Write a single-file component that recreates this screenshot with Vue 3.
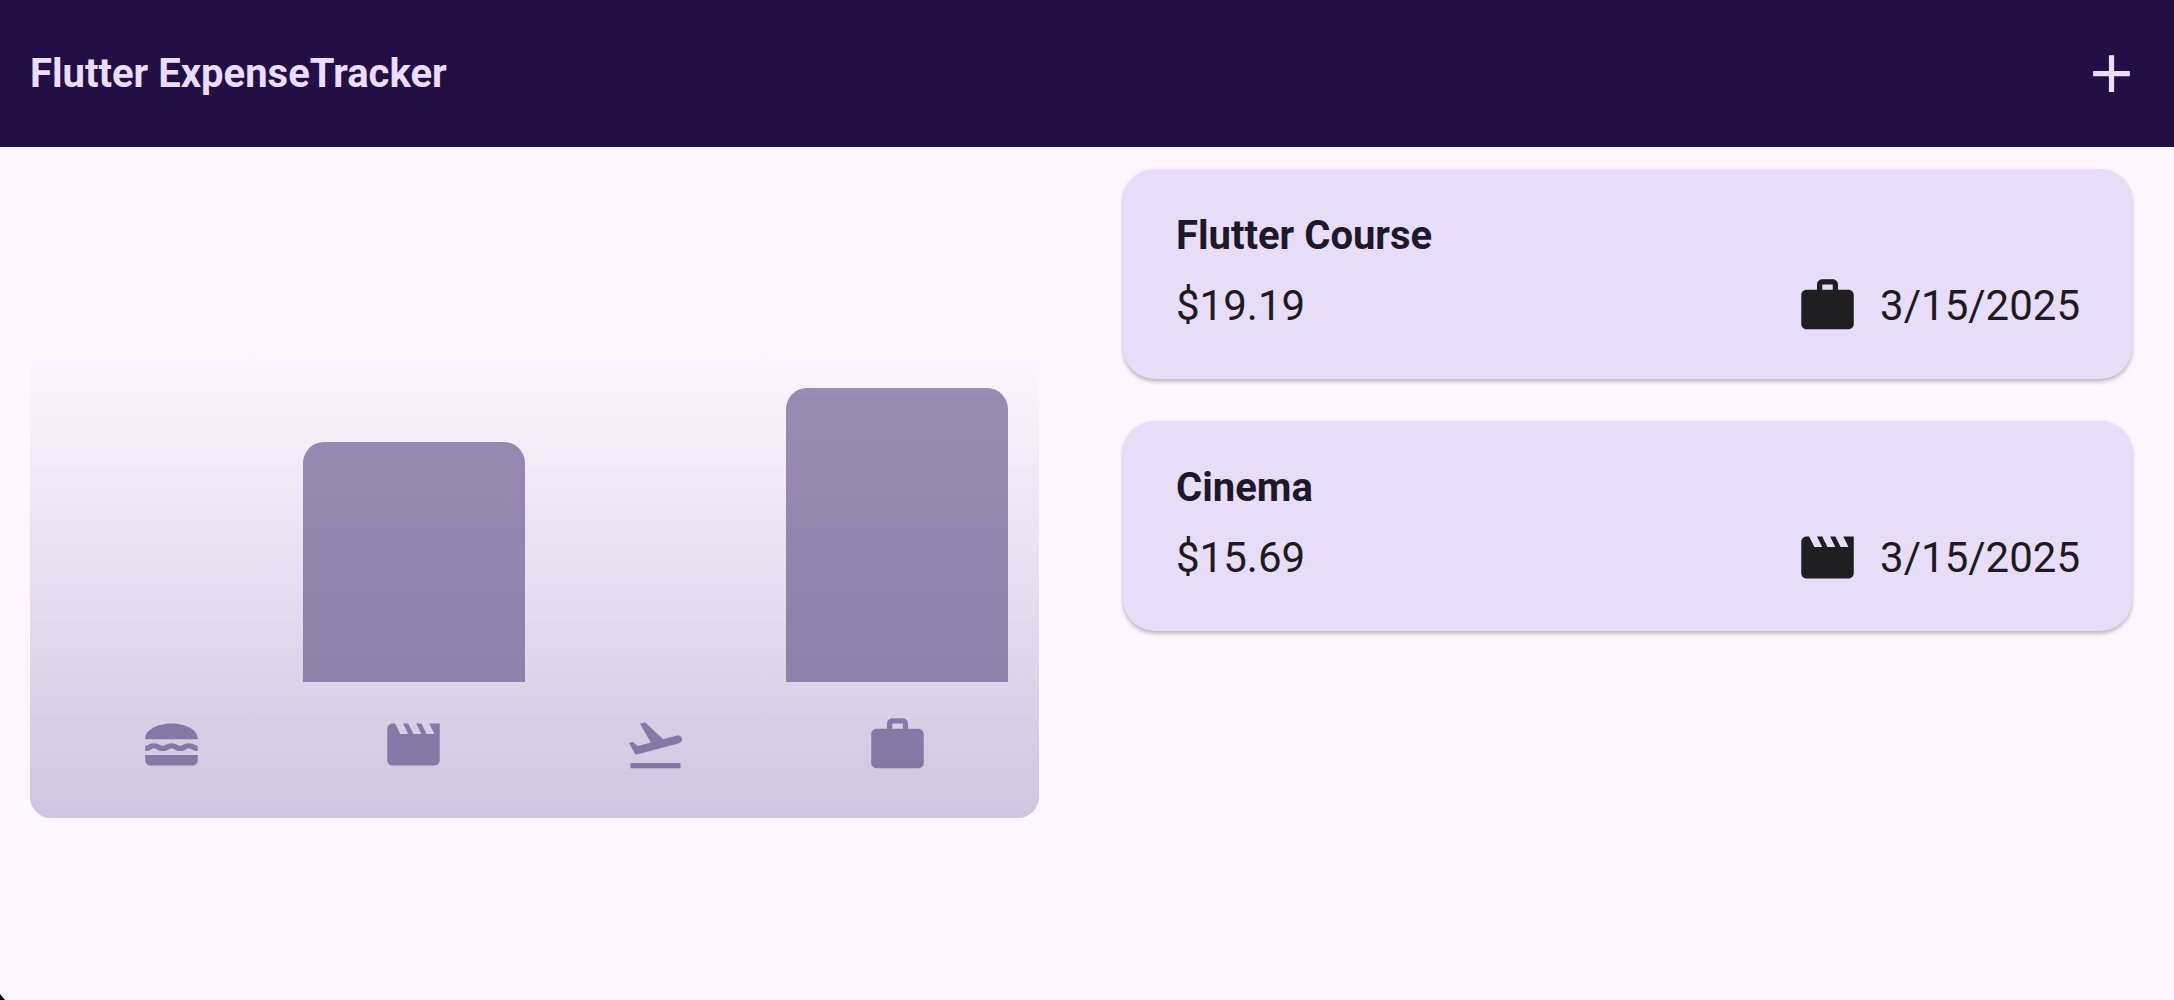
<script setup>
import { computed } from 'vue'

const icons = {
  food: 'M22 10c.32-3.28-4.28-6-9.99-6C6.3 4 1.7 6.72 2.02 10H22zM5.35 13.5c.55 0 .78.14 1.15.36.45.27 1.07.64 2.18.64s1.73-.37 2.18-.64c.37-.23.59-.36 1.15-.36.55 0 .78.14 1.15.36.45.27 1.07.64 2.18.64 1.11 0 1.73-.37 2.18-.64.37-.23.59-.36 1.15-.36.55 0 .78.14 1.15.36.45.27 1.07.63 2.17.64v-1.98s-.79-.16-1.16-.38c-.45-.27-1.07-.64-2.18-.64-1.11 0-1.73.37-2.18.64-.37.23-.6.36-1.15.36s-.78-.14-1.15-.36c-.45-.27-1.07-.64-2.18-.64s-1.73.37-2.18.64c-.37.23-.59.36-1.15.36-.55 0-.78-.14-1.15-.36-.45-.27-1.07-.64-2.18-.64-1.11 0-1.73.37-2.18.64-.37.23-.59.36-1.15.36v2c1.11 0 1.73-.37 2.21-.64.37-.23.59-.36 1.14-.36zM2 16v2c0 1.1.9 2 2 2h16c1.1 0 2-.9 2-2v-2H2z',
  leisure: 'M18 4l2 4h-3l-2-4h-2l2 4h-3l-2-4H8l2 4H7L5 4H4c-1.1 0-1.99.9-1.99 2L2 18c0 1.1.9 2 2 2h16c1.1 0 2-.9 2-2V4h-4z',
  travel: 'M2.5 19h19v2h-19zM22.07 9.64c-.21-.8-1.04-1.28-1.84-1.06L14.92 10l-6.9-6.43-1.93.51 4.14 7.17-4.97 1.33-1.97-1.54-1.45.39 1.82 3.16.77 1.33 1.6-.43 5.31-1.42 4.35-1.16L21 11.49c.81-.23 1.28-1.05 1.07-1.85z',
  work: 'M20 6h-4V4c0-1.11-.89-2-2-2h-4c-1.11 0-2 .89-2 2v2H4c-1.11 0-1.99.89-1.99 2L2 19c0 1.11.89 2 2 2h16c1.11 0 2-.89 2-2V8c0-1.11-.89-2-2-2zm-6 0h-4V4h4v2z',
}

const expenses = [
  { title: 'Flutter Course', amount: 19.19, date: '3/15/2025', category: 'work' },
  { title: 'Cinema', amount: 15.69, date: '3/15/2025', category: 'leisure' },
]

const buckets = computed(() => {
  const totals = Object.keys(icons).map((category) => ({
    category,
    total: expenses
      .filter((e) => e.category === category)
      .reduce((sum, e) => sum + e.amount, 0),
  }))
  const max = Math.max(...totals.map((b) => b.total))
  return totals.map((b) => ({ ...b, fill: (b.total / max) * 100 }))
})
</script>

<template>
  <div class="app">
    <header class="bar">
      <h1>Flutter ExpenseTracker</h1>
      <button type="button" class="add" aria-label="Add expense">
        <svg class="icon" viewBox="0 0 24 24" aria-hidden="true">
          <path d="M19 13h-6v6h-2v-6H5v-2h6V5h2v6h6v2z" />
        </svg>
      </button>
    </header>

    <main class="content">
      <section class="chart" aria-label="Expenses by category">
        <div v-for="b in buckets" :key="b.category" class="bucket">
          <div class="track">
            <div class="fill" :style="{ height: b.fill + '%' }"></div>
          </div>
          <svg class="icon" viewBox="0 0 24 24" aria-hidden="true">
            <path :d="icons[b.category]" />
          </svg>
        </div>
      </section>

      <ul class="list">
        <li v-for="e in expenses" :key="e.title" class="card">
          <h2>{{ e.title }}</h2>
          <div class="row">
            <span>${{ e.amount.toFixed(2) }}</span>
            <span class="when">
              <svg class="icon" viewBox="0 0 24 24" aria-hidden="true">
                <path :d="icons[e.category]" />
              </svg>
              <span>{{ e.date }}</span>
            </span>
          </div>
        </li>
      </ul>
    </main>
    <div class="corner"></div>
  </div>
</template>

<style>
body {
  background: #fef7ff;
}
</style>

<style scoped>
.app {
  min-height: 100vh;
  background: #fef7ff;
  color: #1d1b20;
  font-family: Roboto, sans-serif;
  font-size: 42px;
}

.icon {
  display: block;
  flex: none;
  width: 63px;
  height: 63px;
  fill: currentColor;
}

.bar {
  display: flex;
  align-items: center;
  justify-content: space-between;
  height: 147px;
  padding: 0 31px 0 30px;
  box-sizing: border-box;
  background: #220f46;
  color: #eaddff;
}

h1,
h2 {
  margin: 0;
  font-size: 40px;
  font-weight: 700;
  line-height: 50px;
}

.add {
  padding: 0;
  border: 0;
  background: none;
  color: inherit;
  cursor: pointer;
}

.content {
  display: grid;
  grid-template-columns: 1fr 1fr;
  column-gap: 84px;
  align-items: start;
  padding: 22px 42px 22px 30px;
}

.chart {
  display: flex;
  height: 472px;
  margin-top: 177px;
  padding: 42px 21px;
  box-sizing: border-box;
  border-radius: 21px;
  background: linear-gradient(to top, #cfc5de, #fef7ff);
}

.bucket {
  display: flex;
  flex: 1;
  flex-direction: column;
  align-items: center;
  gap: 31px;
  color: rgba(101, 83, 140, 0.7);
}

.track {
  display: flex;
  flex: 1;
  flex-direction: column;
  justify-content: flex-end;
  align-self: stretch;
  margin: 0 10px;
}

.fill {
  border-radius: 21px 21px 0 0;
  background: rgba(101, 83, 140, 0.65);
}

.list {
  display: flex;
  flex-direction: column;
  gap: 42px;
  margin: 0;
  padding: 0;
  list-style: none;
}

.card {
  display: flex;
  flex-direction: column;
  gap: 13px;
  padding: 42px 52px 42px 53px;
  border-radius: 32px;
  background: #e7ddf6;
  box-shadow: 0 3px 4px rgba(0, 0, 0, 0.2), 0 1px 4px rgba(0, 0, 0, 0.1);
}

.card h2 {
  color: #1d192b;
}

.row,
.when {
  display: flex;
  align-items: center;
}

.row {
  justify-content: space-between;
}

.when {
  gap: 21px;
}

.when .icon {
  color: #1f1f21;
}

/* Rounded edge of the device showing in the bottom corner */
.corner {
  position: fixed;
  bottom: 0;
  left: 0;
  width: 5px;
  height: 6px;
  background: #000;
  clip-path: polygon(0 0, 100% 100%, 0 100%);
}
</style>
